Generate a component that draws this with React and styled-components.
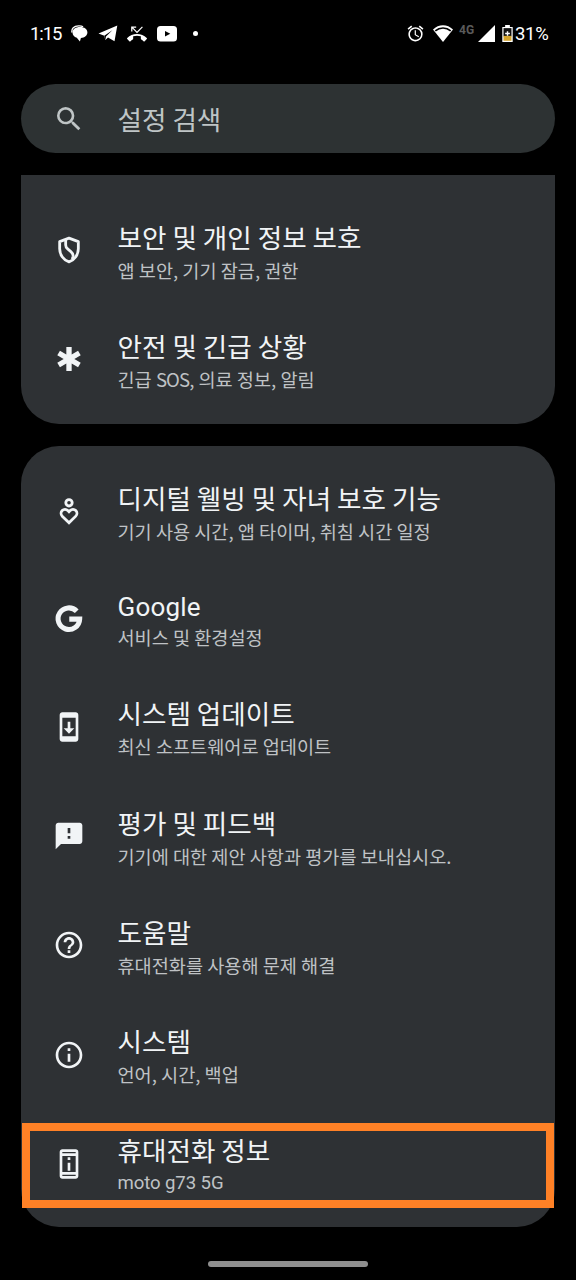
import React from 'react';
import styled, { createGlobalStyle } from 'styled-components';
import {
  MdAlarm,
  MdEmergency,
  MdFeedback,
  MdHelpOutline,
  MdInfoOutline,
  MdOutlinePermDeviceInformation,
  MdPhoneMissed,
  MdSearch,
  MdSystemUpdate,
} from 'react-icons/md';

const GlobalStyle = createGlobalStyle`
  * {
    box-sizing: border-box;
  }

  body {
    margin: 0;
    background: #000;
  }
`;

/* Styled Components */

const Screen = styled.div`
  display: flex;
  flex-direction: column;
  width: 576px;
  height: 1280px;
  overflow: hidden;
  background: #000;
  color: #f1f4f6;
  font-family: 'Noto Sans CJK KR', sans-serif;
`;

const StatusBar = styled.header`
  display: flex;
  align-items: center;
  justify-content: space-between;
  height: 84px;
  padding: 0 26px 17px 30px;
  color: #fff;
  font-family: Roboto, sans-serif;
  font-size: 18.5px;
`;

const StatusGroup = styled.div`
  display: flex;
  align-items: center;

  svg {
    display: block;
    flex: none;
  }
`;

const Clock = styled.span`
  width: 30px;
  margin-right: 11px;
  letter-spacing: -1.1px;
`;

const Notifications = styled.div`
  display: flex;
  align-items: center;
  gap: 9.5px;
`;

const Dot = styled.span`
  width: 5px;
  height: 5px;
  margin-left: 7px;
  border-radius: 50%;
  background: #fff;
`;

const Radios = styled.div`
  display: flex;
  align-items: center;
  margin: 0 7px 0 8px;
`;

const Network = styled.span`
  width: 15px;
  margin: 0 4px 8px 6px;
  color: #5a5a5a;
  font-size: 12px;
  font-weight: 700;
`;

const Percent = styled.span`
  width: 35px;
  margin-left: 2px;
  letter-spacing: -0.3px;
`;

const SearchBar = styled.div`
  display: flex;
  align-items: center;
  flex: none;
  height: 69px;
  margin: 0 21px;
  border-radius: 35px;
  background: #2d3233;
  color: #bfc5c6;
  font-size: 26.6px;
`;

const Results = styled.main`
  display: flex;
  flex-direction: column;
  gap: 22px;
  margin: 22px 21px 0;
`;

const Card = styled.section`
  padding: ${(props) => (props.$cut ? '20.5px 0 9.5px' : '11.5px 0 8px')};
  border-radius: ${(props) => (props.$cut ? '0 0 38px 38px' : '38px')};
  background: #2e3134;
`;

const Row = styled.div`
  position: relative;
  display: flex;
  align-items: center;
  height: ${(props) => (props.$short ? 105.7 : 109.3)}px;
`;

const IconSlot = styled.div`
  display: flex;
  justify-content: center;
  flex: none;
  width: 96.5px;
  padding-right: 0.5px;

  svg {
    display: block;
    width: 32px;
    height: 32px;
  }
`;

const Texts = styled.div`
  white-space: nowrap;
`;

const Title = styled.div`
  padding-top: ${(props) => (props.$latin ? 3 : 0)}px;
  font-family: ${(props) => (props.$latin ? 'Roboto' : "'Noto Sans CJK KR'")}, sans-serif;
  font-size: ${(props) => (props.$latin ? 26 : 26.6)}px;
  line-height: ${(props) => (props.$latin ? 32 : 38)}px;
  letter-spacing: ${(props) => (props.$latin ? '0.2px' : 'normal')};
`;

const Summary = styled.div`
  padding-top: ${(props) => (props.$latin ? 2 : 0)}px;
  color: #bfc2c5;
  font-family: ${(props) => (props.$latin ? 'Roboto' : "'Noto Sans CJK KR'")}, sans-serif;
  font-size: 18.6px;
  line-height: ${(props) => (props.$latin ? 25 : 27)}px;
  letter-spacing: ${(props) => (props.$latin ? '-0.1px' : 'normal')};
`;

const Acronym = styled.span`
  letter-spacing: -0.9px;
`;

const Highlight = styled.div`
  position: absolute;
  top: 14px;
  left: 1px;
  width: 532px;
  height: 85px;
  border: 8px solid #ff8126;
`;

const HomeIndicator = styled.div`
  flex: none;
  width: 160px;
  height: 6px;
  margin: 34px auto 0;
  border-radius: 3px;
  background: #8f8f8f;
`;

/* Icons */

const PrivacyIcon = () => (
  <svg viewBox="0 0 24 24" fill="none" stroke="currentColor" strokeWidth="2.1">
    <path d="M12 3.1 5 5.7v5.4c0 4.5 3 8.6 7 9.8 4-1.2 7-5.3 7-9.8V5.7z" strokeLinejoin="round" />
    <path d="M9.500 4.200v4c0 1.500.6 2.300 1.700 3.200l2.200 1.800c1.300 1.100 1.900 2.200 1.600 3.700l-.5 2" />
  </svg>
);

const WellbeingIcon = () => (
  <svg viewBox="0 0 24 24" fill="none" stroke="currentColor" strokeWidth="2.1">
    <circle cx="12" cy="5.1" r="2.4" />
    <path d="M12 20.1 6.9 15.1a3 3 0 0 1 0-4.2 3 3 0 0 1 4.2 0l.9.9.9-.9a3 3 0 0 1 4.2 0 3 3 0 0 1 0 4.2z" />
  </svg>
);

const GoogleIcon = () => (
  <svg viewBox="0 0 24 24" fill="none" stroke="currentColor" strokeWidth="3.8">
    <path d="M17.8 6.2A8.1 8.1 0 1 0 20 12.1H12.2" />
  </svg>
);

const ChatIcon = () => (
  <svg width="17" height="17" viewBox="0 0 17 17">
    <path d="M1 7.5C.2 3.500 3 1 7.500.8c2-.1 3.500.2 4.600.9" fill="none" stroke="#fff" strokeWidth="1.3" />
    <path d="M9 2c4.500 0 7.400 2.100 7.400 5.500 0 3-2.800 5.200-6.500 5.500l-1 3.500-3.100-3.700C3.200 12 1.500 10 1.500 7.500 1.500 4.100 4.600 2 9 2z" fill="#fff" />
  </svg>
);

const TelegramIcon = () => (
  <svg width="20" height="17" viewBox="0 0 20 17">
    <path d="M.5 8.600 19.300.6 16.500 16.300 10 12.500 7.300 14.900 6.300 10.700z" fill="#fff" />
    <path d="m6.300 10.700 8-5.500-6.300 6.400-.7 3.300z" fill="#000" />
  </svg>
);

const YoutubeIcon = () => (
  <svg width="20" height="16" viewBox="0 0 20 16">
    <rect width="20" height="15.5" rx="3.5" fill="#fff" />
    <path d="m8 5 5.3 2.8L8 10.500z" fill="#000" />
  </svg>
);

const WifiIcon = () => (
  <svg width="20" height="17" viewBox="0 0 20 17">
    <path d="M10 17 0 4.600C5.600-1.200 14.400-1.200 20 4.600z" fill="#fff" />
    <path d="M2.300 5.900C6.800 2 13.200 2 17.700 5.900" fill="none" stroke="#000" strokeWidth="1.7" />
  </svg>
);

const SignalIcon = () => (
  <svg width="17" height="17" viewBox="0 0 17 17">
    <path d="M17 0v17H0z" fill="#fff" />
  </svg>
);

const BatteryIcon = () => (
  <svg width="11" height="17" viewBox="0 0 11 18">
    <path d="M3 0h5v2h3v16H0V2h3z" fill="#fff" />
    <path d="M1.300 3.300h8.400V12H1.300z" fill="#111" />
    <path d="M1.300 11.500h8.400v5.200H1.300z" fill="#d6a52c" />
    <path d="M5.500 6.500v5M3 9h5" stroke="#fff" strokeWidth="1.5" />
  </svg>
);

/* Data */

const topItems = [
  { icon: PrivacyIcon, title: '보안 및 개인 정보 보호', summary: '앱 보안, 기기 잠금, 권한' },
  {
    icon: MdEmergency,
    title: '안전 및 긴급 상황',
    summary: (
      <>
        긴급 <Acronym>SOS</Acronym>, 의료 정보, 알림
      </>
    ),
  },
];

const items = [
  { icon: WellbeingIcon, title: '디지털 웰빙 및 자녀 보호 기능', summary: '기기 사용 시간, 앱 타이머, 취침 시간 일정' },
  { icon: GoogleIcon, title: 'Google', summary: '서비스 및 환경설정', latinTitle: true },
  { icon: MdSystemUpdate, title: '시스템 업데이트', summary: '최신 소프트웨어로 업데이트' },
  { icon: MdFeedback, title: '평가 및 피드백', summary: '기기에 대한 제안 사항과 평가를 보내십시오.' },
  { icon: MdHelpOutline, title: '도움말', summary: '휴대전화를 사용해 문제 해결' },
  { icon: MdInfoOutline, title: '시스템', summary: '언어, 시간, 백업' },
  {
    icon: MdOutlinePermDeviceInformation,
    title: '휴대전화 정보',
    summary: 'moto g73 5G',
    latinSummary: true,
    highlighted: true,
  },
];

/* Main Component */

const SettingsRow = ({ item }) => {
  const Icon = item.icon;

  return (
    <Row $short={item.latinTitle}>
      <IconSlot>
        <Icon />
      </IconSlot>

      <Texts>
        <Title $latin={item.latinTitle}>{item.title}</Title>
        <Summary $latin={item.latinSummary}>{item.summary}</Summary>
      </Texts>

      {item.highlighted && <Highlight />}
    </Row>
  );
};

const App = () => (
  <Screen>
    <GlobalStyle />

    <StatusBar>
      <StatusGroup>
        <Clock>1:15</Clock>
        <Notifications>
          <ChatIcon />
          <TelegramIcon />
          <MdPhoneMissed size={20} />
          <YoutubeIcon />
          <Dot />
        </Notifications>
      </StatusGroup>

      <StatusGroup>
        <MdAlarm size={19} />
        <Radios>
          <WifiIcon />
          <Network>4G</Network>
          <SignalIcon />
        </Radios>
        <BatteryIcon />
        <Percent>31%</Percent>
      </StatusGroup>
    </StatusBar>

    <SearchBar>
      <IconSlot>
        <MdSearch />
      </IconSlot>
      설정 검색
    </SearchBar>

    <Results>
      <Card $cut>
        {topItems.map((item) => <SettingsRow key={item.title} item={item} />)}
      </Card>

      <Card>
        {items.map((item) => <SettingsRow key={item.title} item={item} />)}
      </Card>
    </Results>

    <HomeIndicator />
  </Screen>
);

export default App;
